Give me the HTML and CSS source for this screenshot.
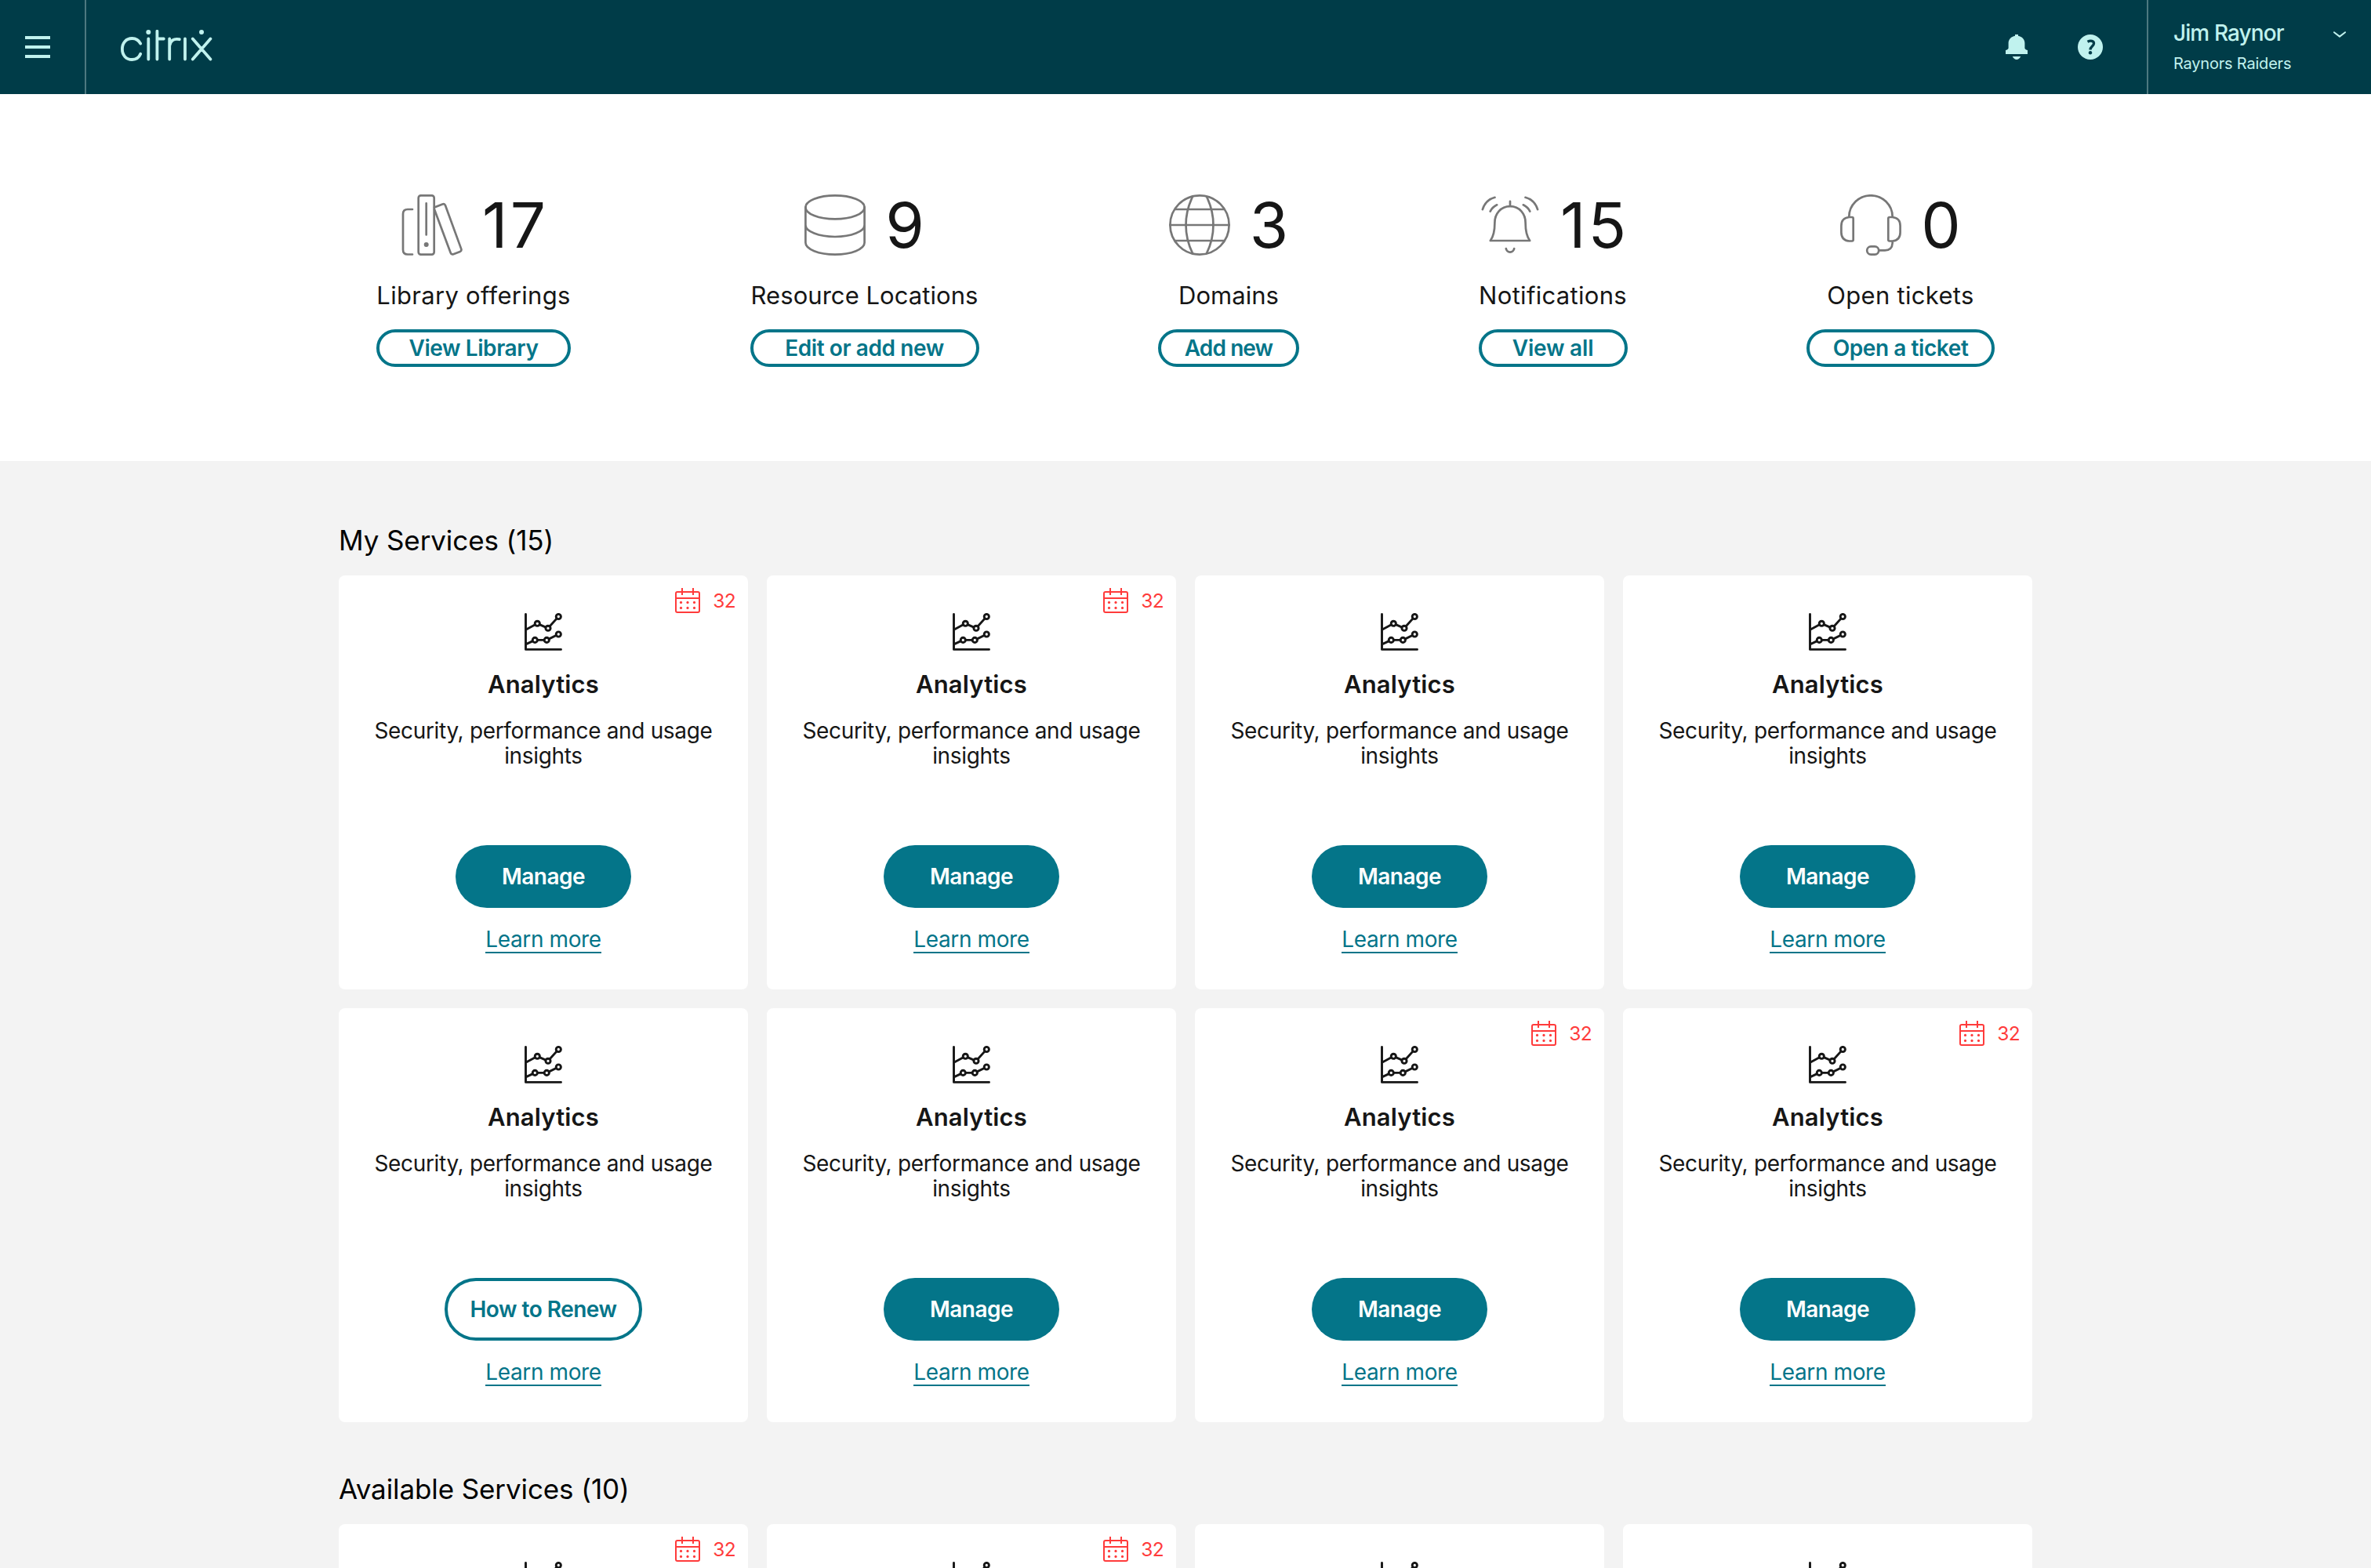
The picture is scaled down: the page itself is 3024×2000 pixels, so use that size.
FILE: index.html
```html
<!DOCTYPE html>
<html lang="en">
<head>
<meta charset="utf-8">
<title>Citrix Cloud</title>
<link rel="stylesheet" href="styles.css">
</head>
<body>
<svg class="sprite" aria-hidden="true">
  <symbol id="chart" viewBox="0 0 48 48">
    <g fill="none" stroke="currentColor" stroke-width="2.9" stroke-linecap="round" stroke-linejoin="round">
      <path d="M1.5 1.5V46.4H46.5M2 21L16.3 13.3L30 19.3L43.3 4.4M2 39.6L13.3 34.4H28.3L43.3 27"/>
      <g fill="#fff"><circle cx="16.3" cy="13.3" r="3.1"/><circle cx="30" cy="19.3" r="3.1"/><circle cx="43.3" cy="4.5" r="3.1"/><circle cx="13.3" cy="34.4" r="3.1"/><circle cx="28.3" cy="34.4" r="3.1"/><circle cx="43.3" cy="27" r="3.1"/></g>
    </g>
  </symbol>
  <symbol id="calendar" viewBox="0 0 32 32">
    <path d="M9 0V9M23 0V9M1 13H31" fill="none" stroke="currentColor" stroke-width="2"/>
    <rect x="1" y="5" width="30" height="26" rx="2" fill="none" stroke="currentColor" stroke-width="2"/>
    <g fill="currentColor"><circle cx="7.5" cy="18.4" r="1.6"/><circle cx="16" cy="18.4" r="1.6"/><circle cx="24.5" cy="18.4" r="1.6"/><circle cx="7.5" cy="25.4" r="1.6"/><circle cx="16" cy="25.4" r="1.6"/><circle cx="24.5" cy="25.4" r="1.6"/></g>
  </symbol>
</svg>

<header class="topbar">
  <button class="menu" aria-label="Menu"><span class="bar"></span><span class="bar"></span><span class="bar"></span></button>
  <svg class="logo" viewBox="154 38 118 42" role="img" aria-label="Citrix">
    <g fill="none" stroke="currentColor" stroke-width="3.8" stroke-linecap="round">
      <path d="M179.2 55.6C177 51.4 173.3 49 168.5 49C160.6 49 155.9 55 155.9 62.6C155.9 70.3 160.6 76 168.5 76C173.3 76 177.3 73.4 179.2 68.8"/>
      <path d="M189.3 49.5V75.5M200.4 39.8V75.5M201 49.5H208.8M216.2 49.5V75.5M216.2 58.5C217 52 221.5 48.6 228.8 50.2M236 49.5V75.5M245.8 49.5L268.4 75.5M268.4 49.5L245.8 75.5"/>
    </g>
    <g fill="currentColor"><circle cx="189.3" cy="41" r="3"/><circle cx="257" cy="41" r="3"/></g>
  </svg>
  <nav class="tools">
    <svg width="28" height="32" viewBox="0 0 28 32" fill="currentColor"><path d="M12 0h4v1.7C21 2.5 24.4 6.300 24.400 11V17.500C25 19.200 26.500 19.800 28 20V25H0V20C1.500 19.800 3 19.200 3.600 17.500V11C3.600 6.300 7 2.500 12 1.700ZM8.700 28H19.300C17.800 30.700 16 32 14 32C12 32 10.200 30.700 8.700 28Z"/></svg>
    <svg width="32" height="32" viewBox="0 0 32 32"><circle cx="16" cy="16" r="16" fill="currentColor"/><g class="cutout"><path d="M12.500 9.200C16.500 7.200 20.800 8.200 20.500 11.700C20.200 15 16 15.200 16 19.500" fill="none" stroke-width="3.300"/><circle cx="16" cy="23.300" r="2.200" stroke="none"/></g></svg>
  </nav>
  <div class="account">
    <div class="who"><div class="user">Jim Raynor</div><div class="org">Raynors Raiders</div></div>
    <svg class="chevron" width="16" height="8" viewBox="0 0 16 8" fill="none" stroke="currentColor" stroke-width="2" stroke-linecap="round" stroke-linejoin="round"><path d="M1 1.200L8 6.600L15 1.200"/></svg>
  </div>
</header>

<section class="stats">
  <div class="stat library">
    <div class="figure">
      <svg class="glyph" viewBox="0 0 78 78"><path d="M14 19H8Q2 19 2 25V70.500Q2 76.500 8 76.500H14M31.700 11.300V51.500"/><rect x="21.700" y="1.400" width="20" height="75.200" rx="3"/><path d="M42 16.600L52.300 12.400Q55 11.400 56 14L76.200 69.400Q77.100 72 74.700 72.900L66.200 76.200Q63.700 77.100 62.700 74.500L42 19"/><circle class="dot" cx="31.700" cy="64" r="3"/></svg>
      <span class="number">17</span>
    </div>
    <div class="label">Library offerings</div>
    <button class="pill">View Library</button>
  </div>
  <div class="stat resources">
    <div class="figure">
      <svg class="glyph" viewBox="0 0 78 78"><ellipse cx="39" cy="16.400" rx="37.600" ry="15"/><path d="M1.400 16.400V61.600A37.600 15 0 0 0 76.600 61.600V16.400M1.400 39A37.600 15 0 0 0 76.600 39"/></svg>
      <span class="number">9</span>
    </div>
    <div class="label">Resource Locations</div>
    <button class="pill">Edit or add new</button>
  </div>
  <div class="stat domains">
    <div class="figure">
      <svg class="glyph" viewBox="0 0 78 78"><circle cx="39" cy="39" r="37.600"/><path d="M8 19H70M1.400 39H76.600M8 59H70M30 3C18.700 26 18.700 52 30 75M48 3C59.300 26 59.300 52 48 75"/></svg>
      <span class="number">3</span>
    </div>
    <div class="label">Domains</div>
    <button class="pill">Add new</button>
  </div>
  <div class="stat alerts">
    <div class="figure">
      <svg class="glyph" viewBox="0 0 78 78"><path d="M39 8.800V15M39 15.200C27 15.200 19.400 25 19.400 36C19.400 47 18 53.500 13.800 59H64.200C60 53.500 58.600 47 58.600 36C58.600 25 51 15.200 39 15.200ZM33.800 69A5.250 5.250 0 0 0 44.200 69M3.900 19.200Q7.500 6.900 19.500 3.800M13.700 21.600Q16.500 16 22.200 13.300M74.100 19.200Q70.500 6.900 58.500 3.800M64.300 21.600Q61.500 16 55.800 13.300"/></svg>
      <span class="number">15</span>
    </div>
    <div class="label">Notifications</div>
    <button class="pill">View all</button>
  </div>
  <div class="stat tickets">
    <div class="figure">
      <svg class="glyph" viewBox="0 0 78 78"><path d="M11.300 28.500A27.700 27.200 0 0 1 66.700 28.500M15 29H11.400Q1.400 30 1.400 40V48.500Q1.400 58.500 11.400 59.500H15Q16.700 59.500 16.700 57.800V30.700Q16.700 29 15 29ZM63 29H66.600Q76.600 30 76.600 40V48.500Q76.600 58.500 66.600 59.500H63Q61.300 59.500 61.300 57.800V30.700Q61.300 29 63 29ZM66.700 60V62Q66.200 71.300 57 71.400H50"/><rect x="34.200" y="66.400" width="15" height="10.200" rx="5"/></svg>
      <span class="number">0</span>
    </div>
    <div class="label">Open tickets</div>
    <button class="pill">Open a ticket</button>
  </div>
</section>

<main class="services">
  <h2 class="heading">My Services (15)</h2>
  <div class="cards">
    <article class="card"><div class="due"><svg class="cal"><use href="#calendar"/></svg>32</div><svg class="chart"><use href="#chart"/></svg><h3 class="name">Analytics</h3><p class="desc">Security, performance and usage insights</p><button class="action">Manage</button><a class="more">Learn more</a></article>
    <article class="card"><div class="due"><svg class="cal"><use href="#calendar"/></svg>32</div><svg class="chart"><use href="#chart"/></svg><h3 class="name">Analytics</h3><p class="desc">Security, performance and usage insights</p><button class="action">Manage</button><a class="more">Learn more</a></article>
    <article class="card"><svg class="chart"><use href="#chart"/></svg><h3 class="name">Analytics</h3><p class="desc">Security, performance and usage insights</p><button class="action">Manage</button><a class="more">Learn more</a></article>
    <article class="card"><svg class="chart"><use href="#chart"/></svg><h3 class="name">Analytics</h3><p class="desc">Security, performance and usage insights</p><button class="action">Manage</button><a class="more">Learn more</a></article>
    <article class="card"><svg class="chart"><use href="#chart"/></svg><h3 class="name">Analytics</h3><p class="desc">Security, performance and usage insights</p><button class="action outline">How to Renew</button><a class="more">Learn more</a></article>
    <article class="card"><svg class="chart"><use href="#chart"/></svg><h3 class="name">Analytics</h3><p class="desc">Security, performance and usage insights</p><button class="action">Manage</button><a class="more">Learn more</a></article>
    <article class="card"><div class="due"><svg class="cal"><use href="#calendar"/></svg>32</div><svg class="chart"><use href="#chart"/></svg><h3 class="name">Analytics</h3><p class="desc">Security, performance and usage insights</p><button class="action">Manage</button><a class="more">Learn more</a></article>
    <article class="card"><div class="due"><svg class="cal"><use href="#calendar"/></svg>32</div><svg class="chart"><use href="#chart"/></svg><h3 class="name">Analytics</h3><p class="desc">Security, performance and usage insights</p><button class="action">Manage</button><a class="more">Learn more</a></article>
  </div>
  <h2 class="heading">Available Services (10)</h2>
  <div class="cards">
    <article class="card"><div class="due"><svg class="cal"><use href="#calendar"/></svg>32</div><svg class="chart"><use href="#chart"/></svg></article>
    <article class="card"><div class="due"><svg class="cal"><use href="#calendar"/></svg>32</div><svg class="chart"><use href="#chart"/></svg></article>
    <article class="card"><svg class="chart"><use href="#chart"/></svg></article>
    <article class="card"><svg class="chart"><use href="#chart"/></svg></article>
  </div>
</main>
</body>
</html>
```
FILE: styles.css
```css
* { box-sizing: border-box; }
body {
  margin: 0;
  height: 2000px;
  overflow: hidden;
  display: flex;
  flex-direction: column;
  background: #f3f3f3;
  color: #161616;
  font-family: Inter, "Liberation Sans", sans-serif;
}
button { padding: 0; font-family: inherit; white-space: nowrap; }
svg { display: block; flex: none; }
.sprite { position: absolute; width: 0; height: 0; }

/* Top bar */
.topbar {
  flex: none;
  height: 120px;
  display: flex;
  align-items: center;
  background: #003c48;
  color: #c0f2ee;
}
.menu {
  width: 110px;
  height: 120px;
  padding-left: 32px;
  display: flex;
  flex-direction: column;
  justify-content: center;
  gap: 8px;
  background: none;
  border: 0;
  border-right: 2px solid #4d7880;
}
.bar { width: 32px; height: 4px; background: #c0f2ee; }
.logo { width: 118px; height: 42px; margin: 0 0 2px 44px; }
.tools { margin-left: auto; display: flex; gap: 64px; }
.cutout { fill: #003c48; stroke: #003c48; }
.account {
  width: 286px;
  height: 120px;
  margin-left: 56px;
  padding: 26px 32px 0 32px;
  display: flex;
  justify-content: space-between;
  border-left: 2px solid #4d7880;
}
.user { font-size: 28px; line-height: 32px; font-weight: 500; letter-spacing: -0.9px; white-space: nowrap; }
.org { margin-top: 11px; font-size: 20px; line-height: 24px; letter-spacing: -0.2px; white-space: nowrap; }
.chevron { margin-top: 14px; }

/* Summary figures */
.stats {
  flex: none;
  height: 468px;
  padding: 128px 480px 0;
  display: flex;
  justify-content: space-between;
  background: #fff;
}
.stat { display: flex; flex-direction: column; align-items: center; }
.library { width: 248px; }
.resources { width: 292px; }
.domains { width: 180px; }
.alerts { width: 190px; }
.tickets { width: 240px; }
.figure { display: flex; gap: 25px; height: 78px; }
.glyph {
  width: 78px;
  height: 78px;
  fill: none;
  stroke: #777;
  stroke-width: 2.7;
  stroke-linecap: round;
  stroke-linejoin: round;
}
.dot { fill: #777; stroke: none; }
.number { margin-right: -3px; font-size: 80px; line-height: 78px; letter-spacing: 3px; }
.label { margin: 31px 0 23px; font-size: 31px; line-height: 40px; letter-spacing: 0.3px; white-space: nowrap; }
.resources .label, .domains .label { letter-spacing: 0.05px; }
.pill {
  width: 100%;
  height: 48px;
  border: 4px solid #047589;
  border-radius: 24px;
  background: none;
  color: #047589;
  font-size: 28px;
  line-height: 40px;
  font-weight: 600;
  letter-spacing: -0.42px;
}
.domains .pill { letter-spacing: -0.9px; }
.alerts .pill { letter-spacing: -0.2px; }

/* Service cards */
.services { flex: none; width: 2160px; margin: 0 auto; padding-top: 77px; }
.heading { margin: 0 0 21px; font-size: 35px; line-height: 48px; font-weight: 400; letter-spacing: -0.1px; color: #000; }
.cards { display: grid; grid-template-columns: repeat(4, 522px); gap: 24px; }
.cards + .heading { margin-top: 61px; }
.card {
  position: relative;
  height: 528px;
  padding: 48px 32px 0;
  display: flex;
  flex-direction: column;
  align-items: center;
  border-radius: 8px;
  background: #fff;
}
.due {
  position: absolute;
  top: 16px;
  right: 16px;
  display: flex;
  gap: 16px;
  color: #ff3b3b;
  font-size: 24.5px;
  line-height: 32px;
  letter-spacing: -0.6px;
}
.cal { width: 32px; height: 32px; }
.chart { width: 48px; height: 48px; }
.name { margin: 23px 0; font-size: 31px; line-height: 40px; font-weight: 600; letter-spacing: 0.15px; }
.desc { width: 450px; height: 64px; margin: 0 0 98px; font-size: 28px; line-height: 32px; letter-spacing: -0.33px; text-align: center; }
.action {
  width: 224px;
  height: 80px;
  border: 0;
  border-radius: 40px;
  background: #047589;
  color: #fff;
  font-size: 28px;
  line-height: 72px;
  font-weight: 600;
  letter-spacing: -0.5px;
}
.outline { width: 252px; border: 4px solid #047589; background: #fff; color: #047589; }
.more {
  height: 34px;
  margin-top: 24px;
  border-bottom: 2px solid #047589;
  color: #047589;
  font-size: 28px;
  line-height: 32px;
  letter-spacing: -0.38px;
}
```
